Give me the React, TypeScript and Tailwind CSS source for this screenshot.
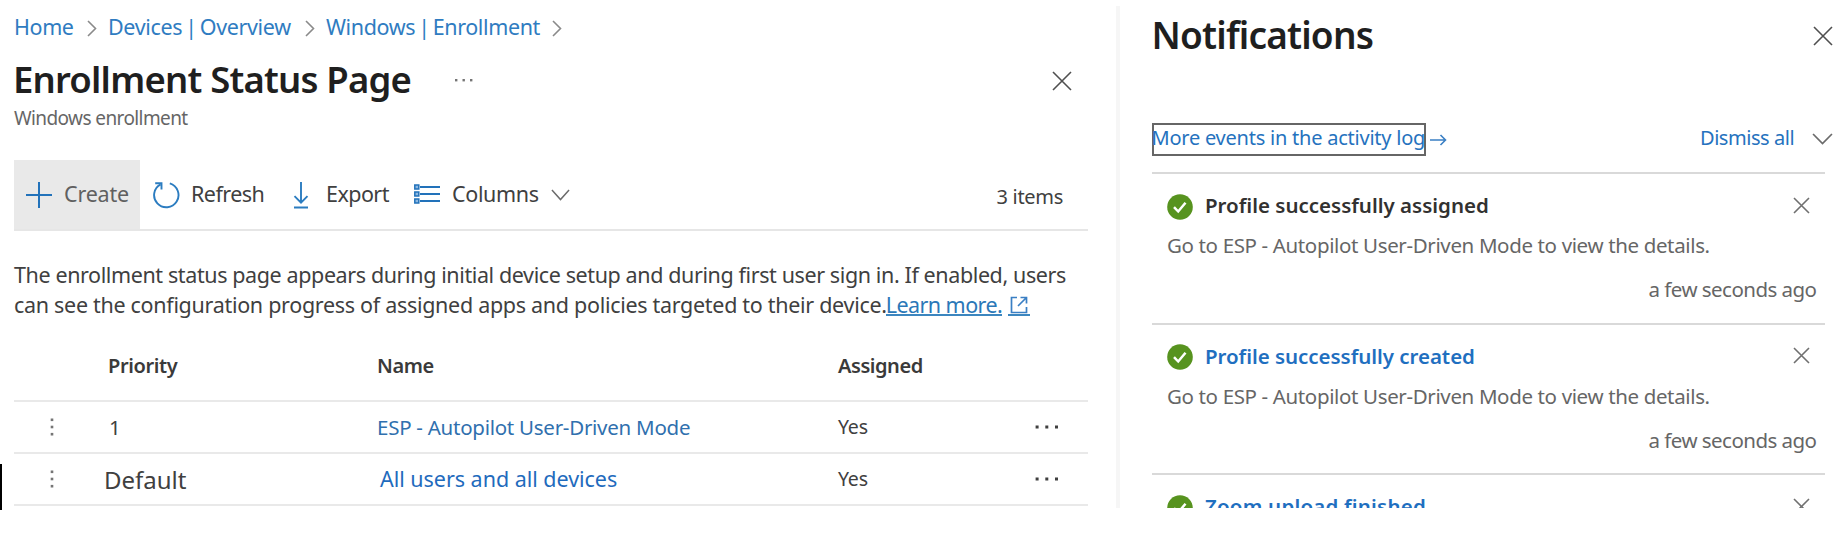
import React from "react";

function Chevron({ className }: { className: string }) {
  return (
    <svg className={className} width="10" height="17" viewBox="0 0 10 17" fill="none" stroke="#8a8a8a" strokeWidth="1.6">
      <path d="M1 1l7.5 7.5L1 16" />
    </svg>
  );
}

function ChevronDown({ width, height }: { width: number; height: number }) {
  return (
    <svg width={width} height={height} viewBox="0 0 20 12" fill="none" stroke="#6b6b6b" strokeWidth="1.6" preserveAspectRatio="none">
      <path d="M1 1l9 9.5L19 1" />
    </svg>
  );
}

function Cross({ size, color }: { size: number; color: string }) {
  return (
    <svg width={size} height={size} viewBox={`0 0 ${size} ${size}`} fill="none" stroke={color} strokeWidth="1.6">
      <path d={`M1 1L${size - 1} ${size - 1}M${size - 1} 1L1 ${size - 1}`} />
    </svg>
  );
}

function SuccessIcon() {
  return (
    <svg width="26" height="26" viewBox="0 0 26 26" fill="none" className="mt-[3px] shrink-0">
      <circle cx="13" cy="13" r="12.8" fill="#57931f" />
      <path d="M7 13.2l4.200 4.300 7.300-8.800" stroke="#fff" strokeWidth="2.5" />
    </svg>
  );
}

function VerticalDots() {
  return (
    <svg width="4" height="18" viewBox="0 0 4 18" fill="#757575">
      <rect x="0.7" y="0.5" width="2.6" height="2.6" />
      <rect x="0.7" y="7.7" width="2.6" height="2.6" />
      <rect x="0.7" y="14.9" width="2.6" height="2.6" />
    </svg>
  );
}

function RowDots() {
  return (
    <svg width="24" height="4" viewBox="0 0 24 4" fill="#3f3f3f">
      <rect x="0.6" y="0.5" width="3" height="3" />
      <rect x="10.3" y="0.5" width="3" height="3" />
      <rect x="20" y="0.5" width="3" height="3" />
    </svg>
  );
}

type Row = { priority: React.ReactNode; name: React.ReactNode };

const rows: Row[] = [
  {
    priority: <span className="ml-px text-[20.5px]">1</span>,
    name: <span className="text-[20.5px] tracking-[-0.26px] text-[#3070ae]">ESP - Autopilot User-Driven Mode</span>,
  },
  {
    priority: <span className="-ml-[4px] pt-px text-[24px]">Default</span>,
    name: <span className="ml-[3px] text-[21.5px] tracking-[-0.03px] text-[#1f6bbd]">All users and all devices</span>,
  },
];

const notifications = [
  { title: "Profile successfully assigned", style: "text-[#323130]", body: true },
  { title: "Profile successfully created", style: "text-[#1f6fc0] tracking-[-0.04px]", body: true },
  { title: "Zoom upload finished", style: "text-[#1f6fc0] tracking-[0.2px]", body: false },
];

export default function App() {
  return (
    <div className="h-[546px] w-[1846px] overflow-hidden bg-white font-['Noto_Sans','Open_Sans',sans-serif] whitespace-nowrap text-[#404040]">
      <div className="relative flex h-[508px] overflow-hidden">
        <main className="w-[1116px] shrink-0 pr-[28px] pl-[14px]">
          <nav className="flex h-[54px] items-center text-[21.5px] text-[#2f7cc1]">
            <a className="w-[73px] tracking-[-0.4px]">Home</a>
            <Chevron className="mt-[3px] mr-[11px]" />
            <a className="w-[197px] tracking-[-0.35px] [word-spacing:-2.2px]">Devices | Overview</a>
            <Chevron className="mt-[3px] mr-[11px]" />
            <a className="w-[226px] tracking-[-0.38px] [word-spacing:-2.2px]">Windows | Enrollment</a>
            <Chevron className="mt-[3px]" />
          </nav>
          <div className="flex h-[49px] items-center">
            <h1 className="w-[441px] pt-px text-[36.5px] leading-[48px] font-semibold tracking-[-0.8px] text-[#1f1f1f]">
              <span className="-ml-px">Enrollment Status Page</span>
            </h1>
            <svg width="18" height="3" viewBox="0 0 18 3" fill="#757575" className="mt-[3px]">
              <rect x="0" y="0" width="2.4" height="2.4" />
              <rect x="7.5" y="0" width="2.4" height="2.4" />
              <rect x="15" y="0" width="2.4" height="2.4" />
            </svg>
            <div className="mt-[4px] mr-[16px] ml-auto">
              <Cross size={20} color="#4f4f4f" />
            </div>
          </div>
          <p className="h-[29px] text-[19px] leading-[31px] tracking-[-0.6px] text-[#666]">Windows enrollment</p>

          <div className="mt-[28px] flex h-[71px] items-center border-b-2 border-[#e6e6e6] text-[21.5px]">
            <button className="flex h-full w-[126px] items-center bg-[#e9e9e9] pl-[12px] text-[#606060]">
              <svg width="26" height="26" viewBox="0 0 26 26" stroke="#2272ba" strokeWidth="2" className="mr-[12px]">
                <path d="M13 0v26M0 13h26" />
              </svg>
              <span className="tracking-[-0.2px]">Create</span>
            </button>
            <button className="flex items-center pl-[12px]">
              <svg width="28" height="28" viewBox="0 0 28 28" fill="none" stroke="#2b7cc0" strokeWidth="1.9" className="mr-[11px]">
                <path d="M17.8 2.4A12.2 12.2 0 1 1 8.6 3.3" />
                <path d="M3.2 2.2h6.3v6.3" />
              </svg>
              <span className="w-[102px] text-left tracking-[-0.55px]">Refresh</span>
            </button>
            <button className="flex items-center">
              <svg width="16" height="28" viewBox="0 0 16 28" fill="none" stroke="#2b7cc0" strokeWidth="1.9" className="mr-[17px]">
                <path d="M8 1v20.5M1.5 15.2L8 21.7l6.500-6.500M1 26.500h14" />
              </svg>
              <span className="w-[88px] text-left tracking-[-0.55px]">Export</span>
            </button>
            <button className="flex items-center">
              <svg width="26" height="20" viewBox="0 0 26 20" fill="none" stroke="#2272ba" strokeWidth="1.9" className="mr-[12px] mb-px">
                <path d="M6 3h20M6 10h20M6 17h20" />
                <g fill="#8db8e2" strokeWidth="1.500">
                  <rect x="0.800" y="1" width="4" height="4" />
                  <rect x="0.800" y="8" width="4" height="4" />
                  <rect x="0.800" y="15" width="4" height="4" />
                </g>
              </svg>
              <span className="w-[99px] text-left tracking-[-0.35px]">Columns</span>
              <ChevronDown width={19} height={12} />
            </button>
            <span className="mt-[4px] mr-[25px] ml-auto text-[20px] tracking-[-0.3px]">3 items</span>
          </div>

          <p className="mt-[29px] text-[21.5px] leading-[30px]">
            <span className="block tracking-[-0.39px]">
              The enrollment status page appears during initial device setup and during first user sign in. If enabled, users
            </span>
            <span className="flex">
              <span className="tracking-[-0.3px]">can see the configuration progress of assigned apps and policies targeted to their device.</span>
              <a className="flex text-[#2b78b8]">
                <span className="-ml-px h-[26px] border-b-2 border-[#3c86bf] leading-[30px] tracking-[-0.55px]">Learn more.</span>
                <span className="ml-[6px] flex h-[26px] w-[22px] justify-center border-b-2 border-[#3c86bf]">
                  <svg width="18" height="18" viewBox="0 0 18 18" fill="none" stroke="#3a7fc4" strokeWidth="1.700" className="mt-[6px]">
                    <path d="M7 1.500H1.500v15h15V11M10.500 1.500h6v6M16.500 1.500L8 10" />
                  </svg>
                </span>
              </a>
            </span>
          </p>

          <div className="mt-[10px] text-[20px]">
            <div className="flex h-[72px] items-center border-b-2 border-[#e9e9e9] pt-[2px] font-semibold text-[#3a3a3a]">
              <span className="ml-[94px] w-[269px] tracking-[-0.4px]">Priority</span>
              <span className="w-[461px] tracking-[-0.4px]">Name</span>
              <span className="tracking-[-0.45px]">Assigned</span>
            </div>
            {rows.map((row, i) => (
              <div key={i} className="flex h-[52px] items-center border-b-2 border-[#e9e9e9]">
                <span className="flex w-[94px] pl-[36px]">
                  <VerticalDots />
                </span>
                <span className="flex w-[269px]">{row.priority}</span>
                <span className="flex w-[461px]">{row.name}</span>
                <span className="w-[197px] pb-px text-[19.5px] tracking-[-0.2px]">Yes</span>
                <RowDots />
              </div>
            ))}
          </div>
        </main>

        <aside className="w-[730px] shrink-0">
          <div className="flex h-full">
            <div className="mt-[6px] w-[4px] shrink-0 bg-[#f6f6f6]" />
            <div className="w-[726px] pl-[31.5px]">
              <header className="flex h-[69px] items-center justify-between pr-[13px]">
                <h2 className="pt-px text-[37px] font-semibold tracking-[-0.82px] text-[#1f1f1f]">Notifications</h2>
                <span className="mt-[3px]">
                  <Cross size={20} color="#4f4f4f" />
                </span>
              </header>
              <div className="mt-[54px] flex h-[33px] items-start pr-[13px] text-[20px] leading-[29px] text-[#2572be]">
                <a className="h-[33px] w-[274px] border-2 border-[#666] leading-[26px] tracking-[-0.23px]">
                  <span className="-ml-[2px]">More events in the activity log</span>
                </a>
                <svg width="17" height="12" viewBox="0 0 17 12" fill="none" stroke="#3a7fc4" strokeWidth="1.600" className="mt-[11px] ml-[4px]">
                  <path d="M0 6h15.500M10.500 1l5 5-5 5" />
                </svg>
                <a className="ml-auto w-[112px] tracking-[-0.45px]">Dismiss all</a>
                <span className="mt-[10px] flex">
                  <ChevronDown width={21} height={12} />
                </span>
              </div>
              <ul className="mt-[16px] w-[673px]">
                {notifications.map((n) => (
                  <li key={n.title} className="h-[150.5px] border-t-2 border-[#d9d9d9] pt-[10px] pr-[8px] pl-[15.5px] text-[20.5px]">
                    <div className="flex h-[42px] items-center">
                      <SuccessIcon />
                      <h3 className={"ml-[12px] pt-px font-semibold " + n.style}>{n.title}</h3>
                      <span className="mr-[7px] ml-auto">
                        <Cross size={17} color="#707070" />
                      </span>
                    </div>
                    {n.body && (
                      <>
                        <p className="leading-[38px] tracking-[-0.36px] text-[#666]">Go to ESP - Autopilot User-Driven Mode to view the details.</p>
                        <p className="text-right leading-[50px] tracking-[-0.53px] text-[#666]">a few seconds ago</p>
                      </>
                    )}
                  </li>
                ))}
              </ul>
            </div>
          </div>
        </aside>
      </div>
      <div className="-mt-[44px] h-[46px] w-[2px] bg-black" />
    </div>
  );
}
